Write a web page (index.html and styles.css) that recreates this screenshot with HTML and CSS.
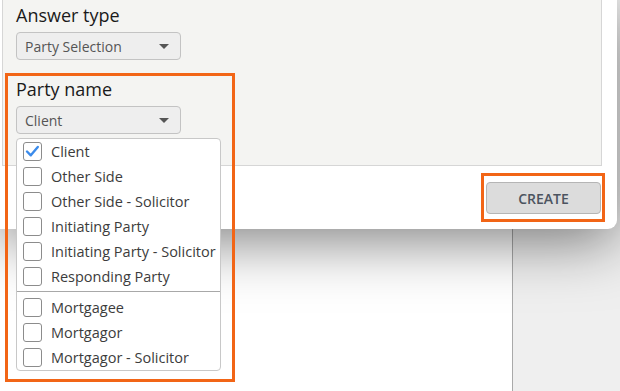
FILE: index.html
```html
<!DOCTYPE html>
<html lang="en">
  <head>
    <meta charset="UTF-8" />
    <title>New question</title>
    <link rel="stylesheet" href="styles.css">
  </head>
  <body>
    <div class="page">
      <div class="page-main"></div>
      <div class="page-side"></div>
    </div>

    <!-- dialog -->
    <div class="dialog">
      <div class="panel">
        <div class="field">
          <label class="field-label">Answer type</label>
          <div class="select">
            <span>Party Selection</span>
            <span class="select-arrow"></span>
          </div>
        </div>

        <div class="field field-party">
          <div class="highlight highlight-party"></div>
          <label class="field-label">Party name</label>
          <div class="select">
            <span>Client</span>
            <span class="select-arrow"></span>
          </div>

          <!-- open dropdown -->
          <div class="party-list">
            <div class="party-item">
              <span class="checkbox checked">
                <svg width="19" height="19" viewBox="0 0 19 19">
                  <polyline points="4,9.5 7.8,13.3 14.8,5" fill="none" stroke="#3b8beb" stroke-width="2.4" stroke-linecap="round" stroke-linejoin="round" />
                </svg>
              </span>
              Client
            </div>
            <div class="party-item"><span class="checkbox"></span>Other Side</div>
            <div class="party-item"><span class="checkbox"></span>Other Side - Solicitor</div>
            <div class="party-item"><span class="checkbox"></span>Initiating Party</div>
            <div class="party-item"><span class="checkbox"></span>Initiating Party - Solicitor</div>
            <div class="party-item"><span class="checkbox"></span>Responding Party</div>
            <div class="party-sep"></div>
            <div class="party-item"><span class="checkbox"></span>Mortgagee</div>
            <div class="party-item"><span class="checkbox"></span>Mortgagor</div>
            <div class="party-item"><span class="checkbox"></span>Mortgagor - Solicitor</div>
          </div>
        </div>
      </div>

      <div class="dialog-footer">
        <div class="highlight-box">
          <button class="create-button">CREATE</button>
        </div>
      </div>
    </div>
  </body>
</html>
```

FILE: styles.css
```css
body {
  margin: 0;
  font-family: "Open Sans", "Noto Sans", sans-serif;
  color: #1f1f1f;
  background-color: #ffffff;
  overflow: hidden;
}
.page {
  display: flex;
  height: 391px;
}
.page-main {
  width: 512px;
  background-color: #ffffff;
  border-right: 1px solid #a9a9a9;
}
.page-side {
  flex: 1;
  background-color: #efefef;
}

/* dialog */
.dialog {
  position: absolute;
  top: 0;
  left: 0;
  width: 617px;
  height: 229px;
  background-color: #ffffff;
  border-bottom-right-radius: 9px;
  box-shadow: 0px 12px 60px rgba(0, 0, 0, 0.5);
  display: flex;
  flex-direction: column;
}
.panel {
  margin-left: 2px;
  width: 600px;
  height: 166px;
  box-sizing: border-box;
  padding: 3px 0 0 13px;
  background-color: #f4f4f2;
  border: 1px solid #d6d6d6;
  border-top: none;
}
.field {
  display: flex;
  flex-direction: column;
  align-items: flex-start;
}
.field-party {
  position: relative;
  margin-top: 17px;
}
.field-label {
  font-size: 18px;
  line-height: 24px;
  color: #1a1a1a;
}
.select {
  margin-top: 5px;
  width: 165px;
  height: 28px;
  box-sizing: border-box;
  padding: 0 8px;
  display: flex;
  align-items: center;
  justify-content: space-between;
  background-color: #eeeeee;
  border: 1px solid #c3c3c3;
  border-radius: 4px;
  font-size: 14px;
  color: #555555;
}
.select-arrow {
  width: 0;
  height: 0;
  margin-right: 3px;
  border-left: 5px solid transparent;
  border-right: 5px solid transparent;
  border-top: 5px solid #555555;
}

/* dropdown list */
.party-list {
  position: absolute;
  top: 61px;
  left: 0;
  width: 205px;
  box-sizing: border-box;
  background-color: #ffffff;
  border: 1px solid #c8c8c8;
  border-radius: 4px;
  z-index: 10;
}
.party-item {
  height: 25px;
  display: flex;
  align-items: center;
  padding-left: 6px;
  font-size: 14.5px;
  color: #3c3c3c;
  white-space: nowrap;
}
.checkbox {
  width: 19px;
  height: 19px;
  flex-shrink: 0;
  box-sizing: border-box;
  margin-right: 9px;
  border: 1px solid #8c8c8c;
  border-radius: 3px;
  display: flex;
}
.checkbox svg {
  margin: -1px;
}
.party-sep {
  height: 1px;
  margin: 2px 0 3px;
  background-color: #a8a8a8;
}

/* orange annotation boxes */
.highlight {
  position: absolute;
  border: 3px solid #f26516;
  pointer-events: none;
  z-index: 20;
}
.highlight-party {
  top: -4px;
  left: -11px;
  width: 224px;
  height: 303px;
}
.highlight-box {
  border: 3px solid #f26516;
  padding: 6px 1px 5px 2px;
}

/* footer */
.dialog-footer {
  display: flex;
  justify-content: flex-end;
  padding: 7px 12px 0 0;
}
.create-button {
  width: 115px;
  height: 32px;
  background-color: #dcdcdc;
  border: 1px solid #b5b5b5;
  border-radius: 4px;
  font-family: "Open Sans", "Noto Sans", sans-serif;
  font-size: 14px;
  font-weight: 600;
  color: #4c5460;
  cursor: pointer;
}
```
